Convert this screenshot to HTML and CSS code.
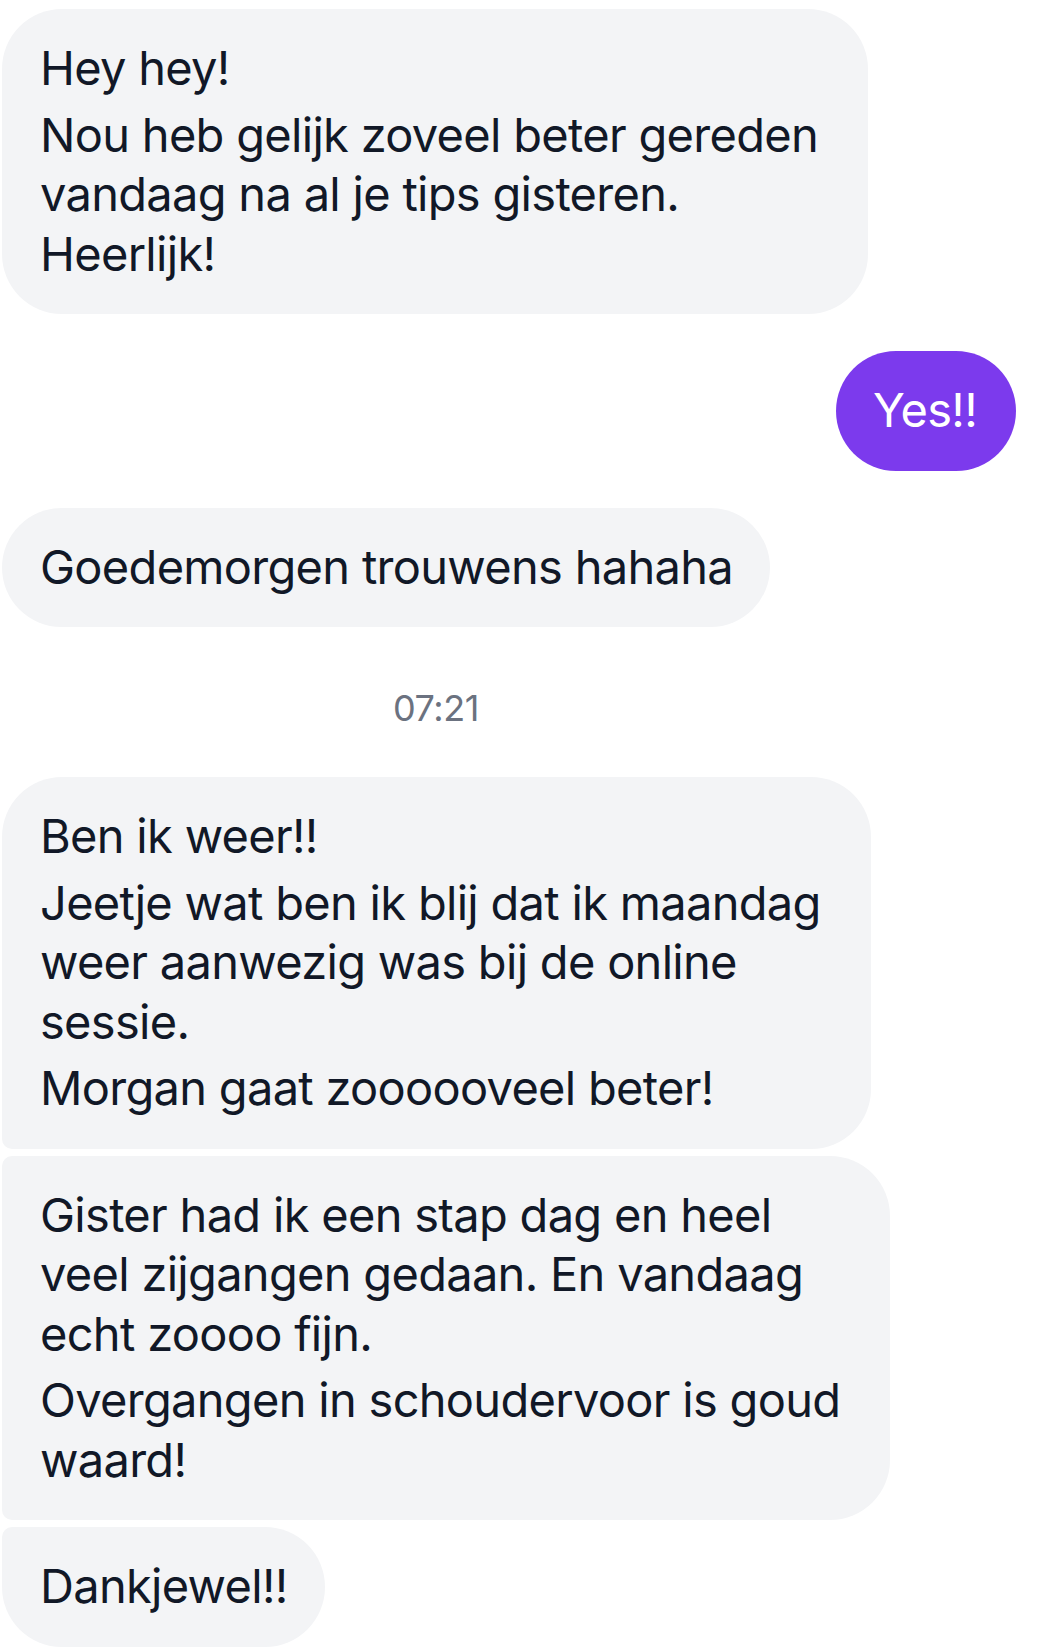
FILE: index.html
```html
<!DOCTYPE html>
<html lang="nl">
<head>
    <meta charset="UTF-8">
    <meta name="viewport" content="width=device-width, initial-scale=1.0">
    <title>Chat</title>
    <link rel="stylesheet" href="styles.css">
</head>
<body>
    <div class="chat">
        <div class="bubble wrapped">
            <p>Hey hey!</p>
            <p>Nou heb gelijk zoveel beter gereden<br>vandaag na al je tips gisteren.<br>Heerlijk!</p>
        </div>

        <div class="bubble sent">
            <p>Yes!!</p>
        </div>

        <div class="bubble">
            <p>Goedemorgen trouwens hahaha</p>
        </div>

        <div class="time">07:21</div>

        <div class="group">
            <div class="bubble wrapped first">
                <p>Ben ik weer!!</p>
                <p>Jeetje wat ben ik blij dat ik maandag<br>weer aanwezig was bij de online<br>sessie.</p>
                <p>Morgan gaat zoooooveel beter!</p>
            </div>
            <div class="bubble wrapped middle">
                <p>Gister had ik een stap dag en heel<br>veel zijgangen gedaan. En vandaag<br>echt zoooo fijn.</p>
                <p>Overgangen in schoudervoor is goud<br>waard!</p>
            </div>
            <div class="bubble last">
                <p>Dankjewel!!</p>
            </div>
        </div>
    </div>
</body>
</html>
```

FILE: styles.css
```css
body {
    margin: 0;
    background-color: #fff;
    font-family: Inter, "Noto Sans", sans-serif;
    color: #111827;
}

.chat {
    display: flex;
    flex-direction: column;
    align-items: flex-start;
    gap: 37px;
    padding: 9px 24px 0 2px;
}

.group {
    display: flex;
    flex-direction: column;
    align-items: flex-start;
    gap: 7px;
}

.bubble {
    background-color: #f3f4f6;
    border-radius: 60px;
    padding: 29px 37px 31px 38px;
    font-size: 47px;
    line-height: 59.5px;
    letter-spacing: -0.7px;
    white-space: nowrap;
}

.bubble p {
    margin: 0;
}

.bubble p + p {
    margin-top: 7px;
}

/* wrapped text keeps the full wrap width, like the app does */
.bubble.wrapped {
    padding-right: 50px;
}

.bubble.sent {
    align-self: flex-end;
    background-color: #7c3aed;
    color: #fff;
    padding-left: 37px;
    padding-right: 39px;
}

.bubble.first {
    border-bottom-left-radius: 10px;
}

.bubble.middle {
    border-top-left-radius: 10px;
    border-bottom-left-radius: 10px;
}

.bubble.last {
    border-top-left-radius: 10px;
}

.time {
    width: 868px;
    margin: 22px 0 10px;
    text-align: center;
    font-size: 36px;
    line-height: 44px;
    letter-spacing: -0.4px;
    color: #6b7280;
}
```
